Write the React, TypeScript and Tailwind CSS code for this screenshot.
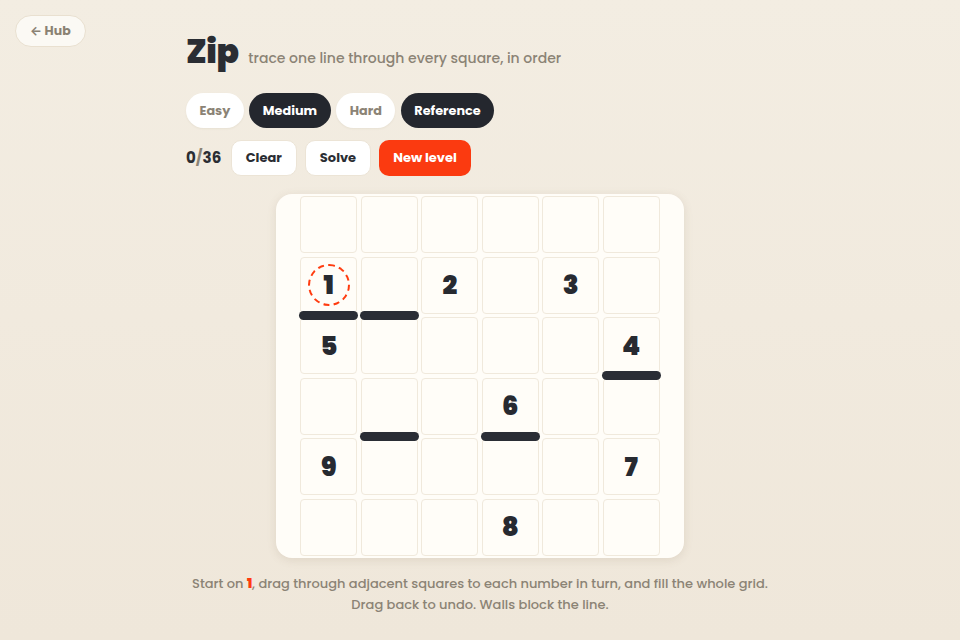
const FONT = { fontFamily: "Poppins, Inter, 'Noto Sans', sans-serif" };

const numbers: Record<string, number> = {
  "1,0": 1,
  "1,2": 2,
  "1,4": 3,
  "2,0": 5,
  "2,5": 4,
  "3,3": 6,
  "4,0": 9,
  "4,5": 7,
  "5,3": 8,
};

// walls drawn on the bottom edge of these cells
const walls = new Set(["1,0", "1,1", "2,5", "3,1", "3,3"]);

function Cell({ r, c }: { r: number; c: number }) {
  const key = `${r},${c}`;
  const n = numbers[key];
  return (
    <div className="relative h-[57px] w-[57px] rounded-[4px] border border-[#f0e9dc] bg-[#fffdf8] flex items-center justify-center">
      {n !== undefined && (
        <span className="relative z-10 text-[26px] font-black leading-none text-[#272a31]">{n}</span>
      )}
      {n === 1 && (
        <span className="absolute left-1/2 top-1/2 h-[42px] w-[42px] -translate-x-1/2 -translate-y-1/2 rounded-full border-[2.5px] border-dashed border-[#ff3b0f]" />
      )}
      {walls.has(key) && (
        <span className="absolute -bottom-[7px] -left-[2px] -right-[2px] z-20 h-[9px] rounded-full bg-[#2a2d35]" />
      )}
    </div>
  );
}

export default function App() {
  const diffs = [
    { label: "Easy", active: false },
    { label: "Medium", active: true },
    { label: "Hard", active: false },
    { label: "Reference", active: true },
  ];
  return (
    <div
      style={FONT}
      className="relative min-h-[640px] w-full bg-gradient-to-b from-[#f3ede2] to-[#efe7da]"
    >
      <button className="absolute left-[15px] top-[15px] h-[32px] rounded-full border border-[#e9e0d0] bg-[#fbf9f4] px-[14px] text-[12.5px] font-bold text-[#8a8172]">
        ← Hub
      </button>

      <div className="mx-auto w-[588px] pt-[32px]">
        <div className="flex items-baseline gap-[10px]">
          <h1 className="text-[33px] font-black leading-[40px] tracking-[-0.5px] text-[#2a2d33]">Zip</h1>
          <p className="text-[14px] font-medium text-[#8b8375]">trace one line through every square, in order</p>
        </div>

        <div className="mt-[21px] flex gap-[5.5px]">
          {diffs.map((d) => (
            <button
              key={d.label}
              className={`h-[35px] rounded-full px-[13.5px] text-[12.8px] font-bold ${
                d.active
                  ? "bg-[#24272e] text-white"
                  : "bg-white text-[#8b8375] shadow-[0_1px_2px_rgba(120,100,70,0.08)]"
              }`}
            >
              {d.label}
            </button>
          ))}
        </div>

        <div className="mt-[12px] flex items-center gap-[8.5px]">
          <span className="mr-[1px] text-[15px] font-bold text-[#2a2d33]">
            0<span className="text-[#8b8375]">/</span>36
          </span>
          <button className="h-[36px] rounded-[10px] border border-[#ece4d6] bg-white px-[14px] text-[13px] font-bold text-[#2a2d33]">
            Clear
          </button>
          <button className="h-[36px] rounded-[10px] border border-[#ece4d6] bg-white px-[13.5px] text-[13px] font-bold text-[#2a2d33]">
            Solve
          </button>
          <button className="h-[36px] rounded-[10px] bg-[#fb3a10] px-[14px] text-[13px] font-bold text-white">
            New level
          </button>
        </div>

        <div className="mt-[18px] flex justify-center">
          <div className="flex w-[408px] justify-center rounded-[16px] bg-[#fffdf8] py-[2px] shadow-[0_2px_10px_rgba(120,100,70,0.14)]">
            <div className="grid grid-cols-6 gap-x-[3.5px] gap-y-[3.5px]">
              {Array.from({ length: 36 }, (_, i) => (
                <Cell key={i} r={Math.floor(i / 6)} c={i % 6} />
              ))}
            </div>
          </div>
        </div>

        <p className="mt-[15px] text-center text-[13px] font-medium leading-[21px] text-[#8b8375]">
          Start on <span className="font-black text-[#ff3b0f]">1</span>, drag through adjacent squares to each number in turn, and fill the whole grid.
          <br />
          Drag back to undo. Walls block the line.
        </p>
      </div>
    </div>
  );
}
